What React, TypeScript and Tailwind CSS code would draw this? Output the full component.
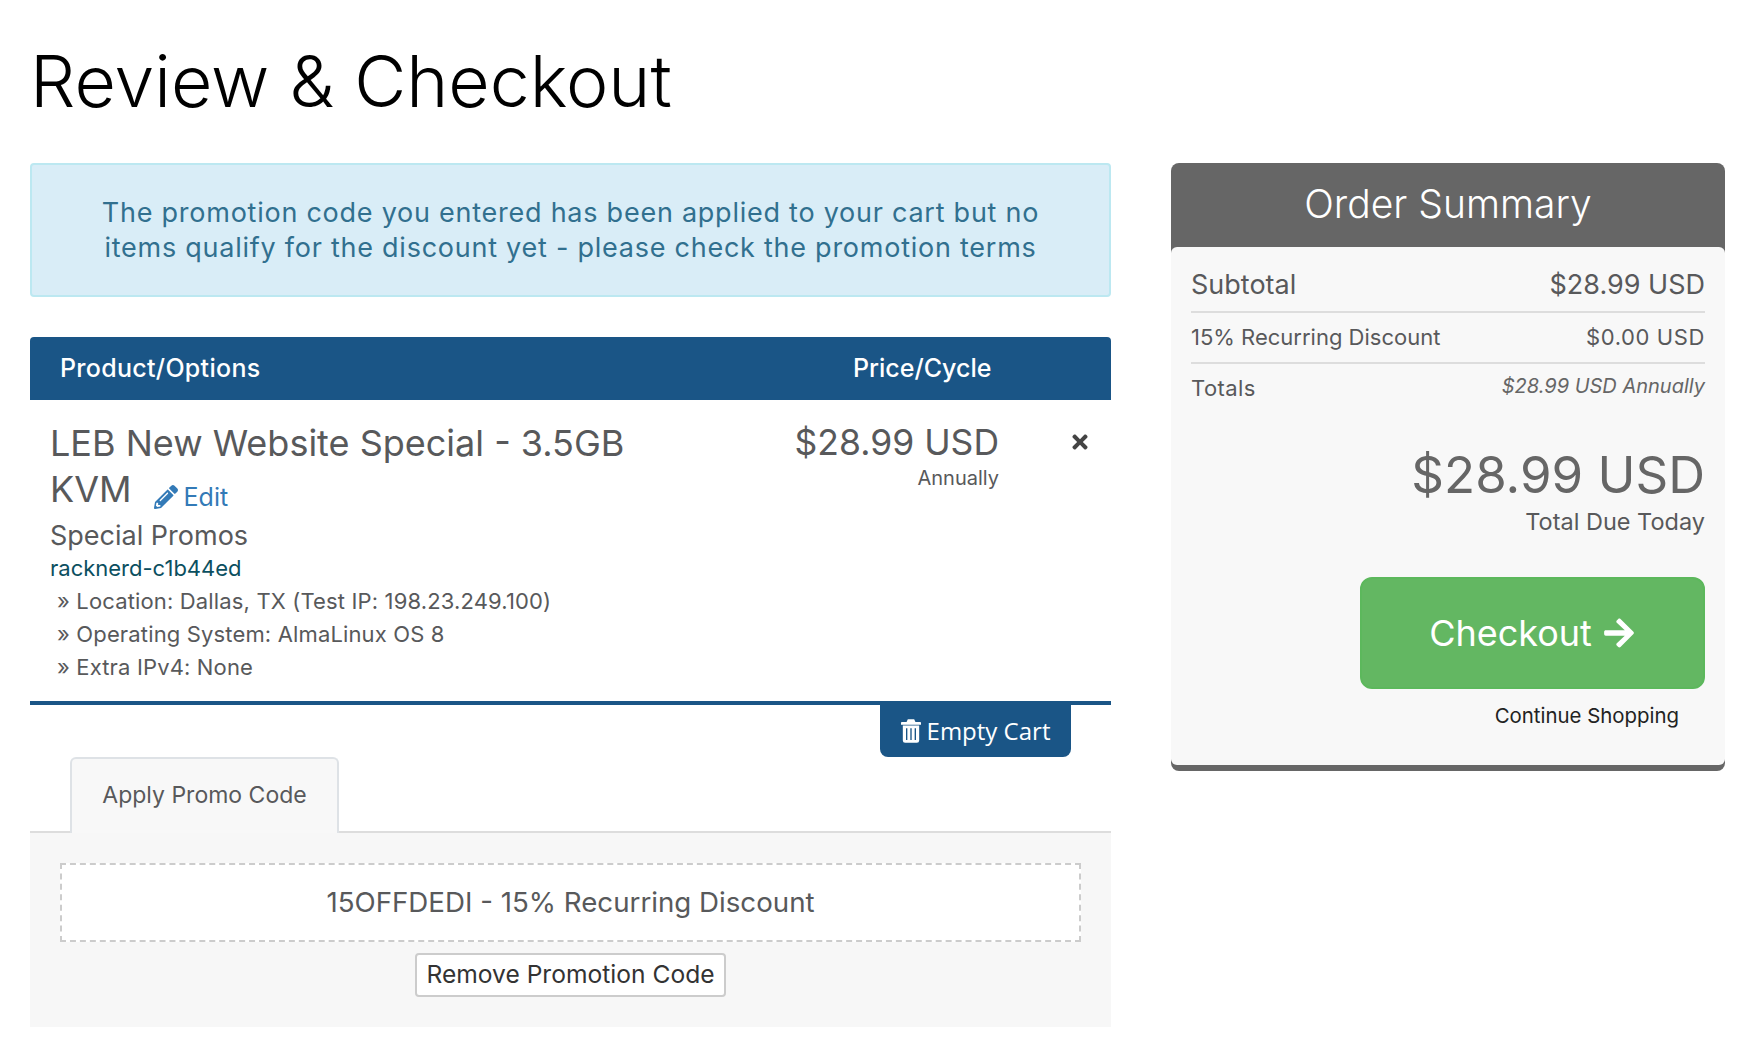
import React from 'react';
import { FaPencilAlt, FaTimes, FaArrowRight } from 'react-icons/fa';

function TrashIcon() {
    return (
        <svg viewBox="0 0 22 26" className="w-[20px] h-[24px] fill-current">
            <path fillRule="evenodd" d="M7.500 0h7l1.400 3H21a1 1 0 0 1 1 1v2H0V4a1 1 0 0 1 1-1h5.100zM2 7h18v16.500A2.500 2.500 0 0 1 17.500 26h-13A2.500 2.500 0 0 1 2 23.500zM5.500 10v13h1.500V10zM10.250 10v13h1.500V10zM15 10v13h1.500V10z" />
        </svg>
    );
}

export default function App() {
    return (
        <div className="min-h-[1050px] bg-white px-[30px] text-[#58595b] font-['Inter','Liberation_Sans',sans-serif]">
            <h1 className="pt-[41px] h-[163px] text-[71.500px] leading-[80px] font-light text-black">
                Review &amp; Checkout
            </h1>

            <div className="flex justify-between pr-[3px]">
                <div className="w-[1081px]">
                    <div className="h-[134px] flex items-center justify-center text-center rounded border-2 border-[#bce8f1] bg-[#d9edf7] text-[#31708f] text-[27px] leading-[35px] tracking-[0.75px] px-[60px]">
                        <p>The promotion code you entered has been applied to your cart but no items qualify for the discount yet - please check the promotion terms</p>
                    </div>

                    <div className="mt-[40px] h-[63px] flex items-center rounded-t bg-[#1a5586] text-white text-[25px] font-medium">
                        <div className="pl-[30px] w-[823px] tracking-[0.3px]">Product/Options</div>
                        <div>Price/Cycle</div>
                    </div>

                    <div className="flex border-b-4 border-[#1a5586] h-[305px] pl-[20px] pt-[20px]">
                        <div className="w-[620px]">
                            <div className="text-[36px] leading-[46px]">
                                LEB New Website Special - 3.5GB KVM
                                <a className="inline-flex items-center gap-[6px] ml-[22px] text-[25px] leading-none align-[-7px] text-[#337ab7]">
                                    <FaPencilAlt className="w-[24px] h-[24px]" />
                                    Edit
                                </a>
                            </div>
                            <div className="mt-[7px] text-[27px] leading-[34px]">Special Promos</div>
                            <div className="text-[22px] leading-[30px] text-[#0b4f5f]">racknerd-c1b44ed</div>
                            <div className="mt-[2px] pl-[7px] text-[22px] leading-[33px] tracking-[0.15px]">
                                <div>» Location: Dallas, TX (Test IP: 198.23.249.100)</div>
                                <div>» Operating System: AlmaLinux OS 8</div>
                                <div>» Extra IPv4: None</div>
                            </div>
                        </div>
                        <div className="w-[329px] text-right">
                            <div className="text-[35.500px] leading-[46px]">$28.99 USD</div>
                            <div className="text-[20px] leading-[24px]">Annually</div>
                        </div>
                        <div className="pl-[70px] pt-[11px] h-fit">
                            <FaTimes className="w-[22px] h-[22px] text-[#444444]" />
                        </div>
                    </div>

                    <div className="flex justify-end pr-[40px]">
                        <button className="h-[52px] w-[191px] flex items-center justify-center gap-[6px] rounded-b-lg bg-[#1a5586] text-white text-[24px] font-['Open_Sans',sans-serif]">
                            <TrashIcon />
                            Empty Cart
                        </button>
                    </div>

                    <div className="pl-[40px] border-b-2 border-[#dddddd] h-[76px]">
                        <div className="w-[269px] h-[76px] pb-[2px] flex items-center justify-center rounded-t-md border-2 border-b-0 border-[#dee2e6] bg-[#f8f8f8] text-[23px]">
                            Apply Promo Code
                        </div>
                    </div>

                    <div className="h-[194px] bg-[#f7f7f7] pt-[30px] px-[30px] flex flex-col items-center">
                        <div className="w-full h-[79px] flex items-center justify-center border-2 border-dashed border-[#cccccc] bg-white text-[27.700px]">
                            15OFFDEDI - 15% Recurring Discount
                        </div>
                        <button className="mt-[11px] w-[311px] h-[44px] pb-[1px] rounded border-2 border-[#cccccc] bg-white text-[#333333] text-[24.600px]">
                            Remove Promotion Code
                        </button>
                    </div>
                </div>

                <div className="w-[554px] h-[608px] rounded-lg bg-[#666666] pb-[6px]">
                    <div className="h-[84px] pb-[1px] flex items-center justify-center text-white text-[39px] font-light">
                        Order Summary
                    </div>
                    <div className="h-[518px] rounded-md bg-[#f8f8f8] px-[20px]">
                        <div className="h-[66px] pt-[12px] flex items-center justify-between border-b-2 border-[#dddddd] text-[27px]">
                            <span>Subtotal</span>
                            <span>$28.99 USD</span>
                        </div>
                        <div className="h-[51px] flex items-center justify-between border-b-2 border-[#dddddd] text-[22px]">
                            <span>15% Recurring Discount</span>
                            <span className="tracking-[0.6px]">$0.00 USD</span>
                        </div>
                        <div className="h-[48px] flex items-center justify-between text-[22px]">
                            <span className="tracking-[0.4px]">Totals</span>
                            <span className="italic text-[20px] -mt-[4px] text-[#666666]">$28.99 USD Annually</span>
                        </div>
                        <div className="mt-[31px] text-right text-[#666666] text-[51px] leading-[64px]">$28.99 USD</div>
                        <div className="text-right text-[23.500px] leading-[30px]">Total Due Today</div>
                        <div className="mt-[40px] flex justify-end">
                            <button className="w-[345px] h-[112px] flex items-center justify-center gap-[10px] rounded-xl border-2 border-[#5cb85c] bg-[#63b762] text-white text-[36px]">
                                Checkout
                                <FaArrowRight className="w-[34px] h-[34px]" />
                            </button>
                        </div>
                        <div className="mt-[14px] pr-[26px] text-right text-[20.400px] leading-[26px] text-[#222222]">Continue Shopping</div>
                    </div>
                </div>
            </div>
        </div>
    );
}
